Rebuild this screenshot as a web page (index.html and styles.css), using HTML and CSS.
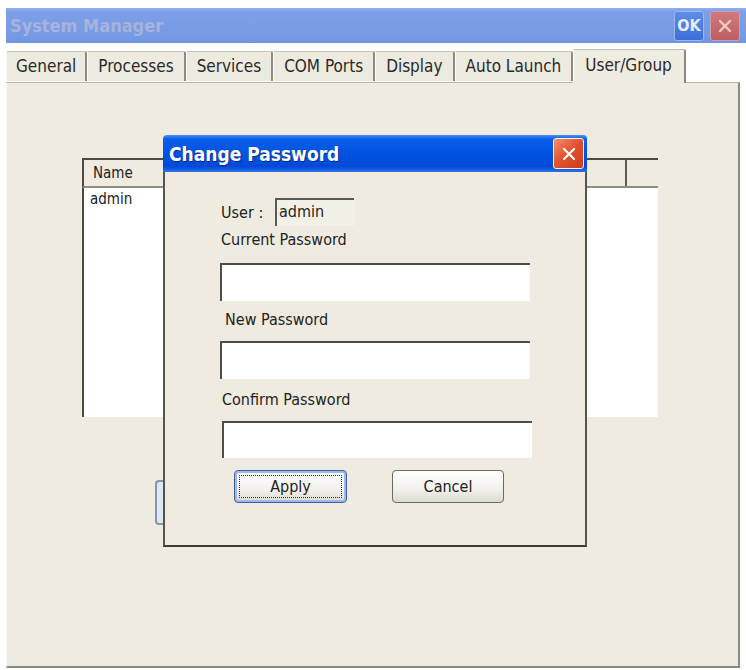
FILE: index.html
```html
<!DOCTYPE html>
<html lang="en">
<head>
    <meta charset="UTF-8">
    <meta name="viewport" content="width=device-width, initial-scale=1.0">
    <title>System Manager</title>
    <link rel="stylesheet" href="styles.css">
</head>
<body>

<div class="window">
    <div class="titlebar">
        <span class="title">System Manager</span>
        <div class="title-buttons">
            <span class="btn-ok">OK</span>
            <span class="btn-x">
                <svg width="14" height="14" viewBox="0 0 14 14"><path d="M2 2 L12 12 M12 2 L2 12" stroke="#f3c9c9" stroke-width="2.4" stroke-linecap="round"/></svg>
            </span>
        </div>
    </div>

    <div class="tabs">
        <div class="tab">General</div>
        <div class="tab">Processes</div>
        <div class="tab">Services</div>
        <div class="tab">COM Ports</div>
        <div class="tab">Display</div>
        <div class="tab">Auto Launch</div>
        <div class="tab active">User/Group</div>
    </div>

    <div class="panel">
        <!-- user list behind the dialog -->
        <div class="listview">
            <div class="list-header">
                <div class="col col-name">Name</div>
                <div class="col col-end"></div>
            </div>
            <div class="list-body">
                <div class="list-row">admin</div>
            </div>
        </div>
        <div class="panel-button"></div>

        <!-- modal dialog -->
        <div class="dialog">
            <div class="dialog-title">
                <span>Change Password</span>
                <span class="dialog-close">
                    <svg width="14" height="14" viewBox="0 0 14 14"><path d="M2 2 L12 12 M12 2 L2 12" stroke="#fff" stroke-width="2.2" stroke-linecap="round"/></svg>
                </span>
            </div>
            <div class="dialog-body">
                <div class="user-row">
                    <span class="user-label">User :</span>
                    <span class="user-box">admin</span>
                </div>
                <div class="field-label">Current Password</div>
                <div class="field"></div>
                <div class="field-label label-new">New Password</div>
                <div class="field"></div>
                <div class="field-label label-confirm">Confirm Password</div>
                <div class="field field-confirm"></div>
                <div class="buttons">
                    <div class="btn btn-default"><span class="focus">Apply</span></div>
                    <div class="btn">Cancel</div>
                </div>
            </div>
        </div>
    </div>
</div>

</body>
</html>
```

FILE: styles.css
```css
* {
    margin: 0;
    padding: 0;
    box-sizing: border-box;
}

html, body {
    width: 100%;
    height: 100%;
    overflow: hidden;
    background-color: #fff;
    font-family: "DejaVu Sans Condensed", "DejaVu Sans", sans-serif;
    color: #222;
}

.window {
    margin: 8px 0 0 6px;
    width: 740px;
}

/* main title bar (inactive look) */
.titlebar {
    height: 35px;
    display: flex;
    align-items: center;
    justify-content: space-between;
    background: linear-gradient(#8fb0ee 0, #7c9fe7 4px, #779ae5 80%, #7094e0 100%);
    padding: 0 6px 0 4px;
}

.title {
    font-weight: bold;
    font-size: 18px;
    color: #a7b3dc;
}

.title-buttons {
    display: flex;
    gap: 6px;
}

.btn-ok,
.btn-x {
    width: 30px;
    height: 30px;
    border-radius: 3px;
    display: flex;
    align-items: center;
    justify-content: center;
}

.btn-ok {
    background: linear-gradient(#5d8ee8, #3b6fd8);
    border: 1px solid #9bb6ee;
    color: #e6eefc;
    font-weight: bold;
    font-size: 16px;
}

.btn-x {
    background: linear-gradient(#cf7a7c, #bf5e62);
    border: 1px solid #c7a0b8;
}

/* tabs */
.tabs {
    height: 39px;
    display: flex;
    align-items: flex-end;
    width: 734px;
    position: relative;
    z-index: 1;
}

.tab {
    height: 30px;
    padding: 0 10px;
    font-size: 17px;
    line-height: 28px;
    background: #edeadf;
    border-top: 1px solid #c5c2b6;
    border-left: 1px solid #fbfbf8;
    border-right: 2px solid #8d8c84;
    border-top-left-radius: 2px;
    border-top-right-radius: 2px;
    color: #2a2a2a;
    margin-bottom: 1px;
}

.tab:first-child {
    padding: 0 9px;
}

.tab.active {
    height: 34px;
    margin-bottom: -1px;
    line-height: 30px;
    background: #efece2;
    border-top: 1px solid #bdbab0;
    padding: 0 12px 3px 11px;
}

/* tab page */
.panel {
    position: relative;
    width: 734px;
    height: 586px;
    background: #efebe1;
    border-top: 1px solid #bab7ac;
    border-left: 1px solid #fbfbf8;
    border-right: 2px solid #8c8b83;
    border-bottom: 2px solid #8c8b83;
    padding: 75px 0 0 75px;
}

.listview {
    width: 576px;
    height: 259px;
    display: flex;
    flex-direction: column;
}

.list-header {
    height: 30px;
    display: flex;
    border-top: 2px solid #4a4a46;
    border-bottom: 2px solid #8f8e86;
    background: #efebe1;
    border-left: 2px solid #4a4a46;
}

.col {
    font-size: 15px;
    line-height: 26px;
    padding-left: 9px;
}

.col-name {
    width: 543px;
    border-right: 2px solid #5e5d58;
}

.col-end {
    flex: 1;
}

.list-body {
    flex: 1;
    background: #fff;
    border-left: 2px solid #4a4a46;
}

.list-row {
    font-size: 15px;
    line-height: 22px;
    padding-left: 6px;
}

.panel-button {
    width: 100px;
    height: 45px;
    margin: 63px 0 0 73px;
    border: 2px solid #8596ad;
    border-radius: 4px;
    background: linear-gradient(90deg, #dde8f4, #f6f8fb);
}

/* change password dialog */
.dialog {
    position: absolute;
    left: 156px;
    top: 52px;
    width: 424px;
    height: 412px;
    display: flex;
    flex-direction: column;
    z-index: 5;
}

.dialog-title {
    height: 37px;
    display: flex;
    align-items: center;
    justify-content: space-between;
    padding: 0 3px 0 6px;
    background: linear-gradient(#4b8ff8 0, #0a5ee9 4px, #0254e2 45%, #0049d8 85%, #2e73e6 100%);
    border-top-left-radius: 4px;
    border-top-right-radius: 4px;
    color: #fff;
    font-weight: bold;
    font-size: 19px;
    text-shadow: 1px 1px 0 #0b2a82;
}

.dialog-close {
    width: 31px;
    height: 31px;
    border: 1px solid #f2f2f2;
    border-radius: 3px;
    background: linear-gradient(135deg, #f0906e, #e1502d 50%, #cc3d1c);
    display: flex;
    align-items: center;
    justify-content: center;
}

.dialog-body {
    flex: 1;
    background: #efebe1;
    border-left: 2px solid #55544f;
    border-right: 2px solid #55544f;
    border-bottom: 2px solid #3b3a36;
    padding: 26px 0 0 55px;
    font-size: 16px;
}

.user-row {
    display: flex;
    align-items: center;
    height: 28px;
}

.user-label {
    width: 55px;
    padding-left: 1px;
}

.user-box {
    width: 79px;
    height: 28px;
    line-height: 24px;
    padding-left: 2px;
    background: #f3f0e8;
    border-top: 2px solid #5a5a55;
    border-left: 2px solid #5a5a55;
}

.field-label {
    margin-top: 5px;
    line-height: 18px;
    padding-left: 1px;
}

.label-new {
    margin-top: 10px;
    padding-left: 5px;
}

.label-confirm {
    margin-top: 12px;
    padding-left: 2px;
}

.field {
    width: 310px;
    height: 38px;
    margin-top: 14px;
    background: #fff;
    border-top: 2px solid #4e4e4a;
    border-left: 2px solid #4e4e4a;
}

.label-new + .field,
.field-confirm {
    margin-top: 12px;
}

.field-confirm {
    height: 37px;
    margin-left: 2px;
}

.buttons {
    display: flex;
    gap: 45px;
    margin: 12px 0 0 14px;
}

.btn {
    width: 112px;
    height: 33px;
    border: 1px solid #6a6a66;
    border-radius: 4px;
    background: linear-gradient(#ffffff, #f2f1ec 60%, #dedbd0);
    display: flex;
    align-items: center;
    justify-content: center;
    font-size: 16px;
}

.btn-default {
    width: 113px;
    border-color: #40609a;
    box-shadow: inset 0 0 0 2px #9cbaf0;
    padding: 4px;
}

.focus {
    width: 100%;
    height: 100%;
    border: 1px dotted #333;
    display: flex;
    align-items: center;
    justify-content: center;
}
```
